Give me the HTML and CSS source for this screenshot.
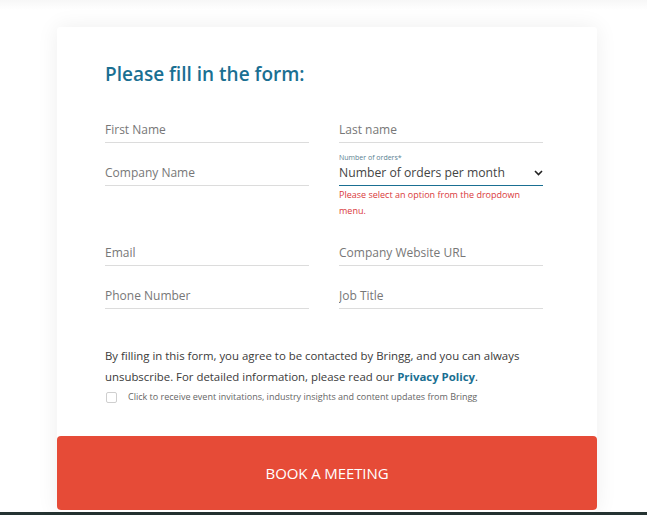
FILE: index.html
```html
<!DOCTYPE html>
<html lang="en">
<head>
<meta charset="utf-8">
<title>Book a meeting</title>
<link rel="stylesheet" href="styles.css">
</head>
<body>
<div class="topshade"></div>
<main class="page">
  <form class="card">
    <div class="card-body">
      <h2 class="title">Please fill in the form:</h2>
      <div class="grid">
        <div class="field"><input class="input" type="text" placeholder="First Name"></div>
        <div class="field"><input class="input" type="text" placeholder="Last name"></div>
        <div class="field"><input class="input" type="text" placeholder="Company Name"></div>
        <div class="field-select">
          <div class="field select-wrap">
            <span class="float-label">Number of orders*</span>
            <select class="select">
              <option>Number of orders per month</option>
            </select>
            <svg class="chev" width="9" height="6" viewBox="0 0 9 6"><path d="M1 1l3.5 3.5L8 1" fill="none" stroke="#222" stroke-width="1.6"/></svg>
          </div>
          <p class="error">Please select an option from the dropdown menu.</p>
        </div>
        <div class="field"><input class="input" type="text" placeholder="Email"></div>
        <div class="field"><input class="input" type="text" placeholder="Company Website URL"></div>
        <div class="field"><input class="input" type="text" placeholder="Phone Number"></div>
        <div class="field"><input class="input" type="text" placeholder="Job Title"></div>
      </div>
      <p class="consent">By filling in this form, you agree to be contacted by Bringg, and you can always unsubscribe. For detailed information, please read our <a class="link" href="#">Privacy Policy</a>.</p>
      <label class="check-row"><span class="box"></span><span class="check-text">Click to receive event invitations, industry insights and content updates from Bringg</span></label>
    </div>
    <button class="btn" type="button">BOOK A MEETING</button>
  </form>
</main>
<div class="bottombar"></div>
</body>
</html>
```
FILE: styles.css
```css
* { box-sizing: border-box; }
html, body { margin: 0; padding: 0; }
body {
  width: 647px;
  height: 515px;
  overflow: hidden;
  background: #ffffff;
  font-family: "Open Sans", "Liberation Sans", sans-serif;
  display: flex;
  flex-direction: column;
  position: relative;
}
.topshade {
  position: absolute;
  top: 0; left: 0; right: 0;
  height: 10px;
  background: linear-gradient(#f7f7f7, #ffffff);
}
.page {
  flex: 1;
  padding: 27px 0 0 57px;
  display: flex;
  position: relative;
}
.card {
  width: 540px;
  margin: 0;
  display: flex;
  flex-direction: column;
  box-shadow: 0 0 22px rgba(0,0,0,0.07);
  background: #fff;
  border-radius: 3px 3px 4px 4px;
}
.card-body {
  padding: 34px 54px 0 48px;
  height: 409px;
}
.title {
  margin: 0 0 26px;
  font-size: 19px;
  font-weight: 600;
  color: #1a6f92;
  line-height: 26px;
}
.grid {
  display: grid;
  grid-template-columns: 204px 204px;
  column-gap: 30px;
  row-gap: 13px;
  align-items: start;
}
.field {
  height: 30px;
  border-bottom: 1px solid #dcdcdc;
  display: flex;
  align-items: flex-end;
  position: relative;
}
.input {
  width: 100%;
  border: 0;
  outline: 0;
  padding: 0 0 5px;
  margin: 0;
  font-family: inherit;
  font-size: 12px;
  line-height: 16px;
  height: 21px;
  color: #333;
  background: transparent;
}
.input::placeholder { color: #777; opacity: 1; }
.select-wrap {
  border-bottom: 1.5px solid #1a6f92;
}
.float-label {
  position: absolute;
  top: -3px;
  left: 0;
  font-size: 7px;
  line-height: 10px;
  color: #5a7f92;
}
.select {
  appearance: none;
  -webkit-appearance: none;
  width: 100%;
  border: 0;
  outline: 0;
  background: transparent;
  padding: 0 0 4px;
  margin: 0;
  font-family: inherit;
  font-size: 12.2px;
  line-height: 16px;
  height: 21px;
  color: #444;
}
.chev {
  position: absolute;
  right: 0;
  bottom: 9px;
}
.error {
  margin: 0 0 4px;
  padding-top: 1px;
  font-size: 9px;
  line-height: 16px;
  color: #d9393b;
}
.consent {
  margin: 36px 0 0;
  font-size: 11.4px;
  line-height: 21px;
  color: #3a3a3a;
}
.link {
  color: #1a6f92;
  font-weight: 700;
  text-decoration: none;
}
.check-row {
  display: flex;
  align-items: center;
  gap: 11px;
  margin-top: 3px;
  padding-left: 1px;
}
.box {
  width: 11px;
  height: 11px;
  border: 1px solid #cfcfcf;
  border-radius: 2px;
  background: #fff;
  flex: none;
}
.check-text {
  font-size: 9px;
  line-height: 14px;
  color: #666;
}
.btn {
  height: 74px;
  width: 100%;
  border: 0;
  border-radius: 4px;
  background: #e64b37;
  color: #fff;
  font-family: inherit;
  font-size: 15px;
  letter-spacing: -0.1px;
  padding: 0;
  cursor: pointer;
}
.bottombar {
  height: 3px;
  background: #253332;
  flex: none;
}
```
